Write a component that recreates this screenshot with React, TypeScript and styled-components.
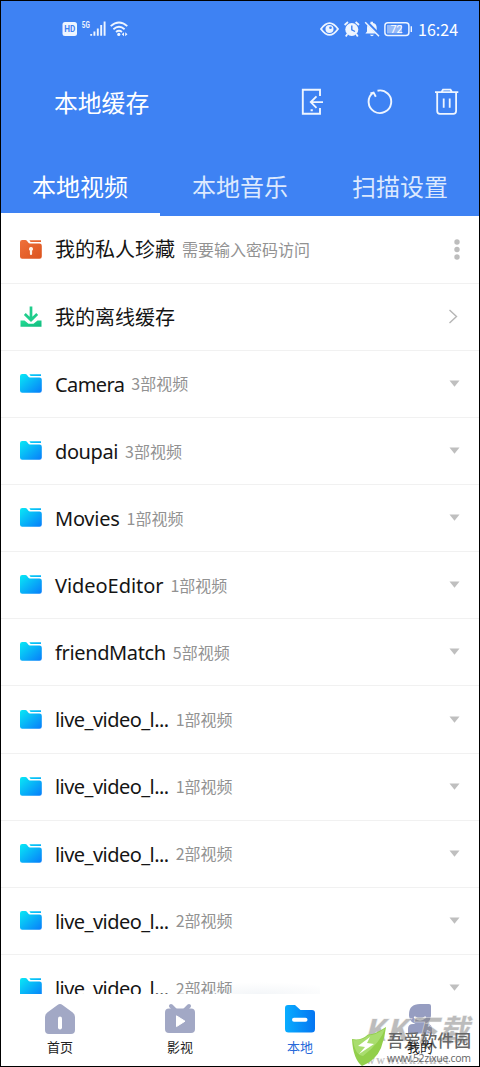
import React from 'react';
import styled, { createGlobalStyle } from 'styled-components';

const Global = createGlobalStyle`
  * { box-sizing: border-box; }
  body { margin: 0; background: #fff; font-family: "Noto Sans", "Noto Sans CJK SC", sans-serif; }
`;

const Screen = styled.div`
  position: relative;
  display: flex;
  flex-direction: column;
  width: 480px;
  height: 1067px;
  overflow: hidden;
  background: #fff;
  &::after {
    content: '';
    position: absolute;
    inset: 0;
    border: 1px solid #000;
    pointer-events: none;
  }
`;
const Header = styled.header`
  display: flex;
  flex-direction: column;
  flex: none;
  height: 216px;
  background: #3e82f3;
  color: #fff;
`;
const StatusBar = styled.div`
  display: flex;
  align-items: center;
  justify-content: space-between;
  height: 58px;
  padding: 0 21px 0 62px;
`;
const StatusGroup = styled.div<{ $gap: number }>`
  display: flex;
  align-items: center;
  gap: ${p => p.$gap}px;
`;
const Clock = styled.span`
  width: 41px;
  font: 16px/20px "Noto Sans CJK SC", sans-serif;
  letter-spacing: 0.05px;
  white-space: nowrap;
`;
const TitleBar = styled.div`
  display: flex;
  align-items: center;
  height: 88px;
  padding: 0 19px 0 54px;
`;
const Title = styled.h1`
  flex: 1;
  margin: 0;
  font: 400 23.8px/34px "Noto Sans CJK SC", sans-serif;
`;
const Actions = styled.div`
  display: flex;
  align-items: center;
  gap: 40px;
`;
const Tabs = styled.nav`
  display: grid;
  grid-template-columns: repeat(3, 160px);
  height: 70px;
`;
const Tab = styled.div<{ $active?: boolean }>`
  display: flex;
  justify-content: center;
  padding-top: 22px;
  border-bottom: 3px solid ${p => (p.$active ? '#fff' : 'transparent')};
  color: ${p => (p.$active ? '#fff' : '#dce9fe')};
  font: 24px/36px "Noto Sans CJK SC", sans-serif;
`;
const List = styled.main`
  flex: none;
  height: 778px;
  padding-top: 0.6px;
  overflow: hidden;
`;
const Row = styled.div`
  display: flex;
  align-items: center;
  height: 67.13px;
  padding: 0 19px 0 19px;
  border-bottom: 1px solid #f1f1f1;
`;
const Name = styled.span<{ $tracking?: number }>`
  margin: 0 7px 0 12px;
  padding-top: 1.6px;
  color: #151515;
  font-size: 20px;
  line-height: 30px;
  letter-spacing: ${p => p.$tracking ?? 0}px;
  white-space: nowrap;
`;
const Note = styled.span`
  flex: 1;
  padding-bottom: 1px;
  color: #929292;
  font: 16px/24px "Noto Sans CJK SC", sans-serif;
  white-space: nowrap;
`;
const BottomNav = styled.footer`
  position: relative;
  display: grid;
  grid-template-columns: repeat(4, 120px);
  height: 73px;
  background: #fff;
  &::before {
    content: '';
    position: absolute;
    left: 170px;
    top: -12px;
    width: 150px;
    height: 12px;
    background: radial-gradient(ellipse at 60% 100%, rgba(90, 125, 160, 0.07), transparent 70%);
  }
`;
const NavItem = styled.div<{ $active?: boolean }>`
  display: flex;
  flex-direction: column;
  align-items: center;
  gap: 2px;
  padding-top: 9px;
  color: ${p => (p.$active ? '#2769d9' : '#222')};
  font: 13px/20px "Noto Sans CJK SC", sans-serif;
`;
const NavLabel = styled.span`
  position: relative;
  z-index: 3;
`;
const GreyMark = styled.div`
  position: absolute;
  left: 364px;
  top: 1008px;
  color: rgba(130, 130, 130, 0.55);
  font: italic 900 30px/40px "Noto Sans CJK SC", sans-serif;
  letter-spacing: 0.8px;
  white-space: nowrap;
  -webkit-text-stroke: 0.6px rgba(250, 250, 250, 0.7);
`;
const GreyUrl = styled.div`
  position: absolute;
  left: 366px;
  top: 1052px;
  color: #c4c4c4;
  font: 700 12px/16px "Liberation Serif", serif;
  letter-spacing: 1.6px;
`;
const SiteMark = styled.div`
  position: absolute;
  left: 351px;
  top: 1025px;
  display: flex;
  z-index: 2;
`;
const SiteText = styled.div`
  display: flex;
  flex-direction: column;
  margin-left: -1px;
  padding-top: 5px;
  color: #666;
`;
const SiteName = styled.span`
  font: 500 16.8px/21px "Noto Sans CJK SC", sans-serif;
  white-space: nowrap;
`;
const SiteUrl = styled.span`
  font: 10.5px/14px "Open Sans", sans-serif;
  letter-spacing: -0.32px;
`;

const Folder = ({ locked }: { locked?: boolean }) => (
  <svg width="24" height="24" viewBox="0 0 24 24">
    <defs>
      <linearGradient id="cyan" x1="0" y1="0" x2="1" y2="1">
        <stop offset="0" stopColor="#08e9f5" /><stop offset="1" stopColor="#087cfa" />
      </linearGradient>
      <linearGradient id="orange" x1="0" y1="0" x2="1" y2="1">
        <stop offset="0" stopColor="#ef713b" /><stop offset="1" stopColor="#dc531d" />
      </linearGradient>
    </defs>
    <path d="M1 4.2Q1 2 3.2 2H6.3Q7.4 2 8.1 3L9.2 4.6Q9.9 5.5 11 5.5H20.5Q22.8 5.5 22.8 7.8V18.5Q22.8 20.8 20.5 20.8H3.2Q1 20.8 1 18.5ZM10.4 2.2H22V3.9H11.6Z" fill={locked ? 'url(#orange)' : 'url(#cyan)'} />
    {locked && <path d="M12 9a2 2 0 0 0-1.1 3.7V16a1.1 1.1 0 0 0 2.2 0v-3.3A2 2 0 0 0 12 9Z" fill="#fff3e8" />}
  </svg>
);

const Download = () => (
  <svg width="24" height="24" viewBox="0 0 24 24">
    <defs>
      <linearGradient id="green" x1="0" y1="0" x2="1" y2="1">
        <stop offset="0" stopColor="#25df96" /><stop offset="1" stopColor="#10b87d" />
      </linearGradient>
    </defs>
    <path d="M1.5 15.5H5.5L9.5 18.8H14.5L18.5 15.5H22.5V21.8H1.5Z" fill="url(#green)" />
    <path d="M12 1.5V15M5.8 9L12 15L18.2 9" fill="none" stroke="#20cd8c" strokeWidth="2.7" />
  </svg>
);

const Arrow = styled.svg<{ $shift?: number }>`
  flex: none;
  margin-right: ${p => p.$shift ?? 0}px;
`;
const More = () => (
  <Arrow width="6" height="24" $shift={1}>
    <circle cx="3" cy="4" r="2.7" fill="#bdbdbd" /><circle cx="3" cy="11.5" r="2.7" fill="#bdbdbd" /><circle cx="3" cy="19" r="2.7" fill="#bdbdbd" />
  </Arrow>
);
const Chevron = () => (
  <Arrow width="10" height="16" $shift={3}>
    <path d="M1.5 1L8.5 7.5L1.5 14" fill="none" stroke="#b5b5b5" strokeWidth="1.4" />
  </Arrow>
);
const Caret = () => (
  <Arrow width="11" height="10" $shift={1}>
    <path d="M.5 1.5H10.5L5.5 7.8Z" fill="#bfbfbf" />
  </Arrow>
);

const folders: [string, string, number][] = [
  ['Camera', '3部视频', -0.6],
  ['doupai', '3部视频', -0.4],
  ['Movies', '1部视频', -0.25],
  ['VideoEditor', '1部视频', -0.05],
  ['friendMatch', '5部视频', -0.36],
  ['live_video_l...', '1部视频', -0.54],
  ['live_video_l...', '1部视频', -0.54],
  ['live_video_l...', '2部视频', -0.54],
  ['live_video_l...', '2部视频', -0.54],
  ['live_video_l...', '2部视频', -0.54],
];

export default function App() {
  return (
    <Screen>
      <Global />
      <Header>
        <StatusBar>
          <StatusGroup $gap={4}>
            <svg width="66" height="20" viewBox="0 0 66 20">
              <rect x=".5" y="3" width="14.5" height="14" rx="2.5" fill="#eef5ff" />
              <text x="7.8" y="13.2" textAnchor="middle" fontFamily="Roboto" fontWeight="700" fontSize="9" textLength="11" lengthAdjust="spacingAndGlyphs" fill="#3e82f3">HD</text>
              <text x="19.8" y="8.8" fontFamily="Roboto" fontWeight="700" fontSize="8.5" textLength="8" lengthAdjust="spacingAndGlyphs" fill="#eef5ff">5G</text>
              <path d="M29.2 16.8V15M32.4 16.8V12.5M35.8 16.8V9.5M39.2 16.8V6M42.6 16.8V2.5" stroke="#eef5ff" strokeWidth="1.9" />
              <path d="M48.7 7.2Q57 -.2 65.3 7.2M51.4 10.2Q57 5.3 62.6 10.2M54 13Q57 10.5 60 13" fill="none" stroke="#eef5ff" strokeWidth="1.8" />
              <circle cx="56.8" cy="15.4" r="1.6" fill="#eef5ff" />
              <path d="M62 13.2V17.2L59.7 15.2ZM63.2 13.2V17.2L65.5 15.2Z" fill="#eef5ff" />
            </svg>
          </StatusGroup>
          <StatusGroup $gap={6}>
            <svg width="92" height="20" viewBox="0 0 92 20">
              <path d="M1 10Q9.5-1.8 18 10Q9.5 21.8 1 10Z" fill="none" stroke="#eef5ff" strokeWidth="1.8" />
              <circle cx="9.5" cy="10" r="4" fill="#eef5ff" /><circle cx="10.5" cy="8.8" r="1.3" fill="#3e82f3" />
              <circle cx="31.8" cy="10.5" r="6.5" fill="#eef5ff" />
              <path d="M24.6 6L28 3M39 6L35.6 3M27.4 15L25.8 17.5M36.2 15L37.8 17.5" stroke="#eef5ff" strokeWidth="1.8" />
              <path d="M31.8 6.5V10.8L35 12.5" fill="none" stroke="#3e82f3" strokeWidth="1.4" />
              <path d="M45.4 14.5L47 12.5V9Q47 4.7 50.5 4V2.8H53V4Q56.7 4.7 56.7 9V12.5L58.3 14.5ZM49.8 15.8H54Q52 18.5 49.8 15.8Z" fill="#eef5ff" />
              <path d="M46 2.4L60 16.6" stroke="#3e82f3" strokeWidth="3" /><path d="M45.2 3.2L59 17.2" stroke="#eef5ff" strokeWidth="1.5" />
              <rect x="64.9" y="3.8" width="24" height="12.6" rx="3" fill="none" stroke="#eef5ff" strokeWidth="1.5" />
              <rect x="67" y="6" width="15" height="8.4" fill="#94b9f8" />
              <text x="76.5" y="14" textAnchor="middle" fontFamily="Roboto" fontSize="10.8" fill="#fff">72</text>
              <path d="M91.3 7.3V12.9" stroke="#eef5ff" strokeWidth="1.4" />
            </svg>
            <Clock>16:24</Clock>
          </StatusGroup>
        </StatusBar>
        <TitleBar>
          <Title>本地缓存</Title>
          <Actions>
            <svg width="28" height="30" viewBox="0 0 28 30" fill="none" stroke="#eef5ff" strokeWidth="1.9">
              <path d="M23 9V2.8H5.8V26.8H23V21M26 15.1H14M19.5 9.4L13.8 15.1L19.5 20.8M13.6 23.3H15.8" />
            </svg>
            <svg width="28" height="30" viewBox="0 0 28 30" fill="none" stroke="#eef5ff" strokeWidth="1.9">
              <path d="M12.5 3.7A11.3 11.3 0 1 1 8 5.8M5.4 6.5L8.6 5.6L10.8 9.8" />
            </svg>
            <svg width="28" height="30" viewBox="0 0 28 30" fill="none" stroke="#eef5ff" strokeWidth="1.8">
              <path d="M2 5.2H25.3M8.5 5L10 2.7H17.5L19 5M4.2 5.2V24Q4.2 26.8 7 26.8H20.3Q23.1 26.8 23.1 24V5.2M10.7 11.5V20.7M16.7 11.5V20.7" />
            </svg>
          </Actions>
        </TitleBar>
        <Tabs>
          <Tab $active>本地视频</Tab>
          <Tab>本地音乐</Tab>
          <Tab>扫描设置</Tab>
        </Tabs>
      </Header>
      <List>
        <Row><Folder locked /><Name>我的私人珍藏</Name><Note>需要输入密码访问</Note><More /></Row>
        <Row><Download /><Name>我的离线缓存</Name><Note /><Chevron /></Row>
        {folders.map(([name, note, tracking], i) => (
          <Row key={i}><Folder /><Name $tracking={tracking}>{name}</Name><Note>{note}</Note><Caret /></Row>
        ))}
      </List>
      <BottomNav>
        <NavItem>
          <svg width="32" height="32" viewBox="0 0 32 32">
            <path d="M13.5 1.9Q16 .2 18.5 1.9L28.7 9.5Q31 11.2 31 14V27Q31 31 27 31H5Q1 31 1 27V14Q1 11.2 3.3 9.5Z" fill="#a2a8c5" />
            <path d="M16 15.5V24.5" stroke="#fff" strokeWidth="4" strokeLinecap="round" />
          </svg>
          <NavLabel>首页</NavLabel>
        </NavItem>
        <NavItem>
          <svg width="32" height="32" viewBox="0 0 32 32">
            <path d="M7 3L11 7M25 3L21 7" stroke="#a2a8c5" strokeWidth="4" strokeLinecap="round" />
            <rect x="1" y="5.5" width="30" height="24.5" rx="4" fill="#a2a8c5" />
            <path d="M12.5 12.8L21 18.2L12.5 23.6Z" fill="#fff" stroke="#fff" strokeLinejoin="round" />
          </svg>
          <NavLabel>影视</NavLabel>
        </NavItem>
        <NavItem $active>
          <svg width="32" height="32" viewBox="0 0 32 32">
            <defs><linearGradient id="local"><stop stopColor="#08adff" /><stop offset="1" stopColor="#0575f2" /></linearGradient></defs>
            <path d="M1 5Q1 2 4 2H11L16.5 7H28Q31 7 31 10V26Q31 29.5 27.5 29.5H4.5Q1 29.5 1 26Z" fill="url(#local)" />
            <path d="M10 16.8H21.5" stroke="#fff" strokeWidth="4" strokeLinecap="round" />
          </svg>
          <NavLabel>本地</NavLabel>
        </NavItem>
        <NavItem>
          <svg width="32" height="32" viewBox="0 0 32 32">
            <path d="M5 11.5Q5 1 16 1H25Q27 1 27 3V11.5Q27 21.5 16 21.5Q5 21.5 5 11.5Z" fill="#969dc1" />
            <path d="M4 30.5V26Q4 21 9 21H23Q28 21 28 26V30.5Z" fill="#969dc1" />
            <path d="M11 14.5Q16 18.5 21 14.5" fill="none" stroke="#fff" strokeWidth="2.2" strokeLinecap="round" />
          </svg>
          <NavLabel>我的</NavLabel>
        </NavItem>
      </BottomNav>
      <GreyMark>KK下载</GreyMark>
      <GreyUrl>www.kkx.net</GreyUrl>
      <SiteMark>
        <svg width="37" height="42" viewBox="0 0 37 42">
          <path d="M1 14Q10 16 17 9.5Q23 10 35 2Q34 12 30 23Q25 35 11 41Q2 34 1 14Z" fill="#92cf4b" />
          <path d="M2 15Q11 16 17 10.5Q24 10.5 34 3.5Q30 17 12 31Q4 30 2 15Z" fill="#b3e27f" opacity=".7" />
          <path d="M19 12L7 21L14 22L8 29L23 19L16 18Z" fill="#fff" />
        </svg>
        <SiteText>
          <SiteName>吾爱软件园</SiteName>
          <SiteUrl>www.52zixue.com</SiteUrl>
        </SiteText>
      </SiteMark>
    </Screen>
  );
}
